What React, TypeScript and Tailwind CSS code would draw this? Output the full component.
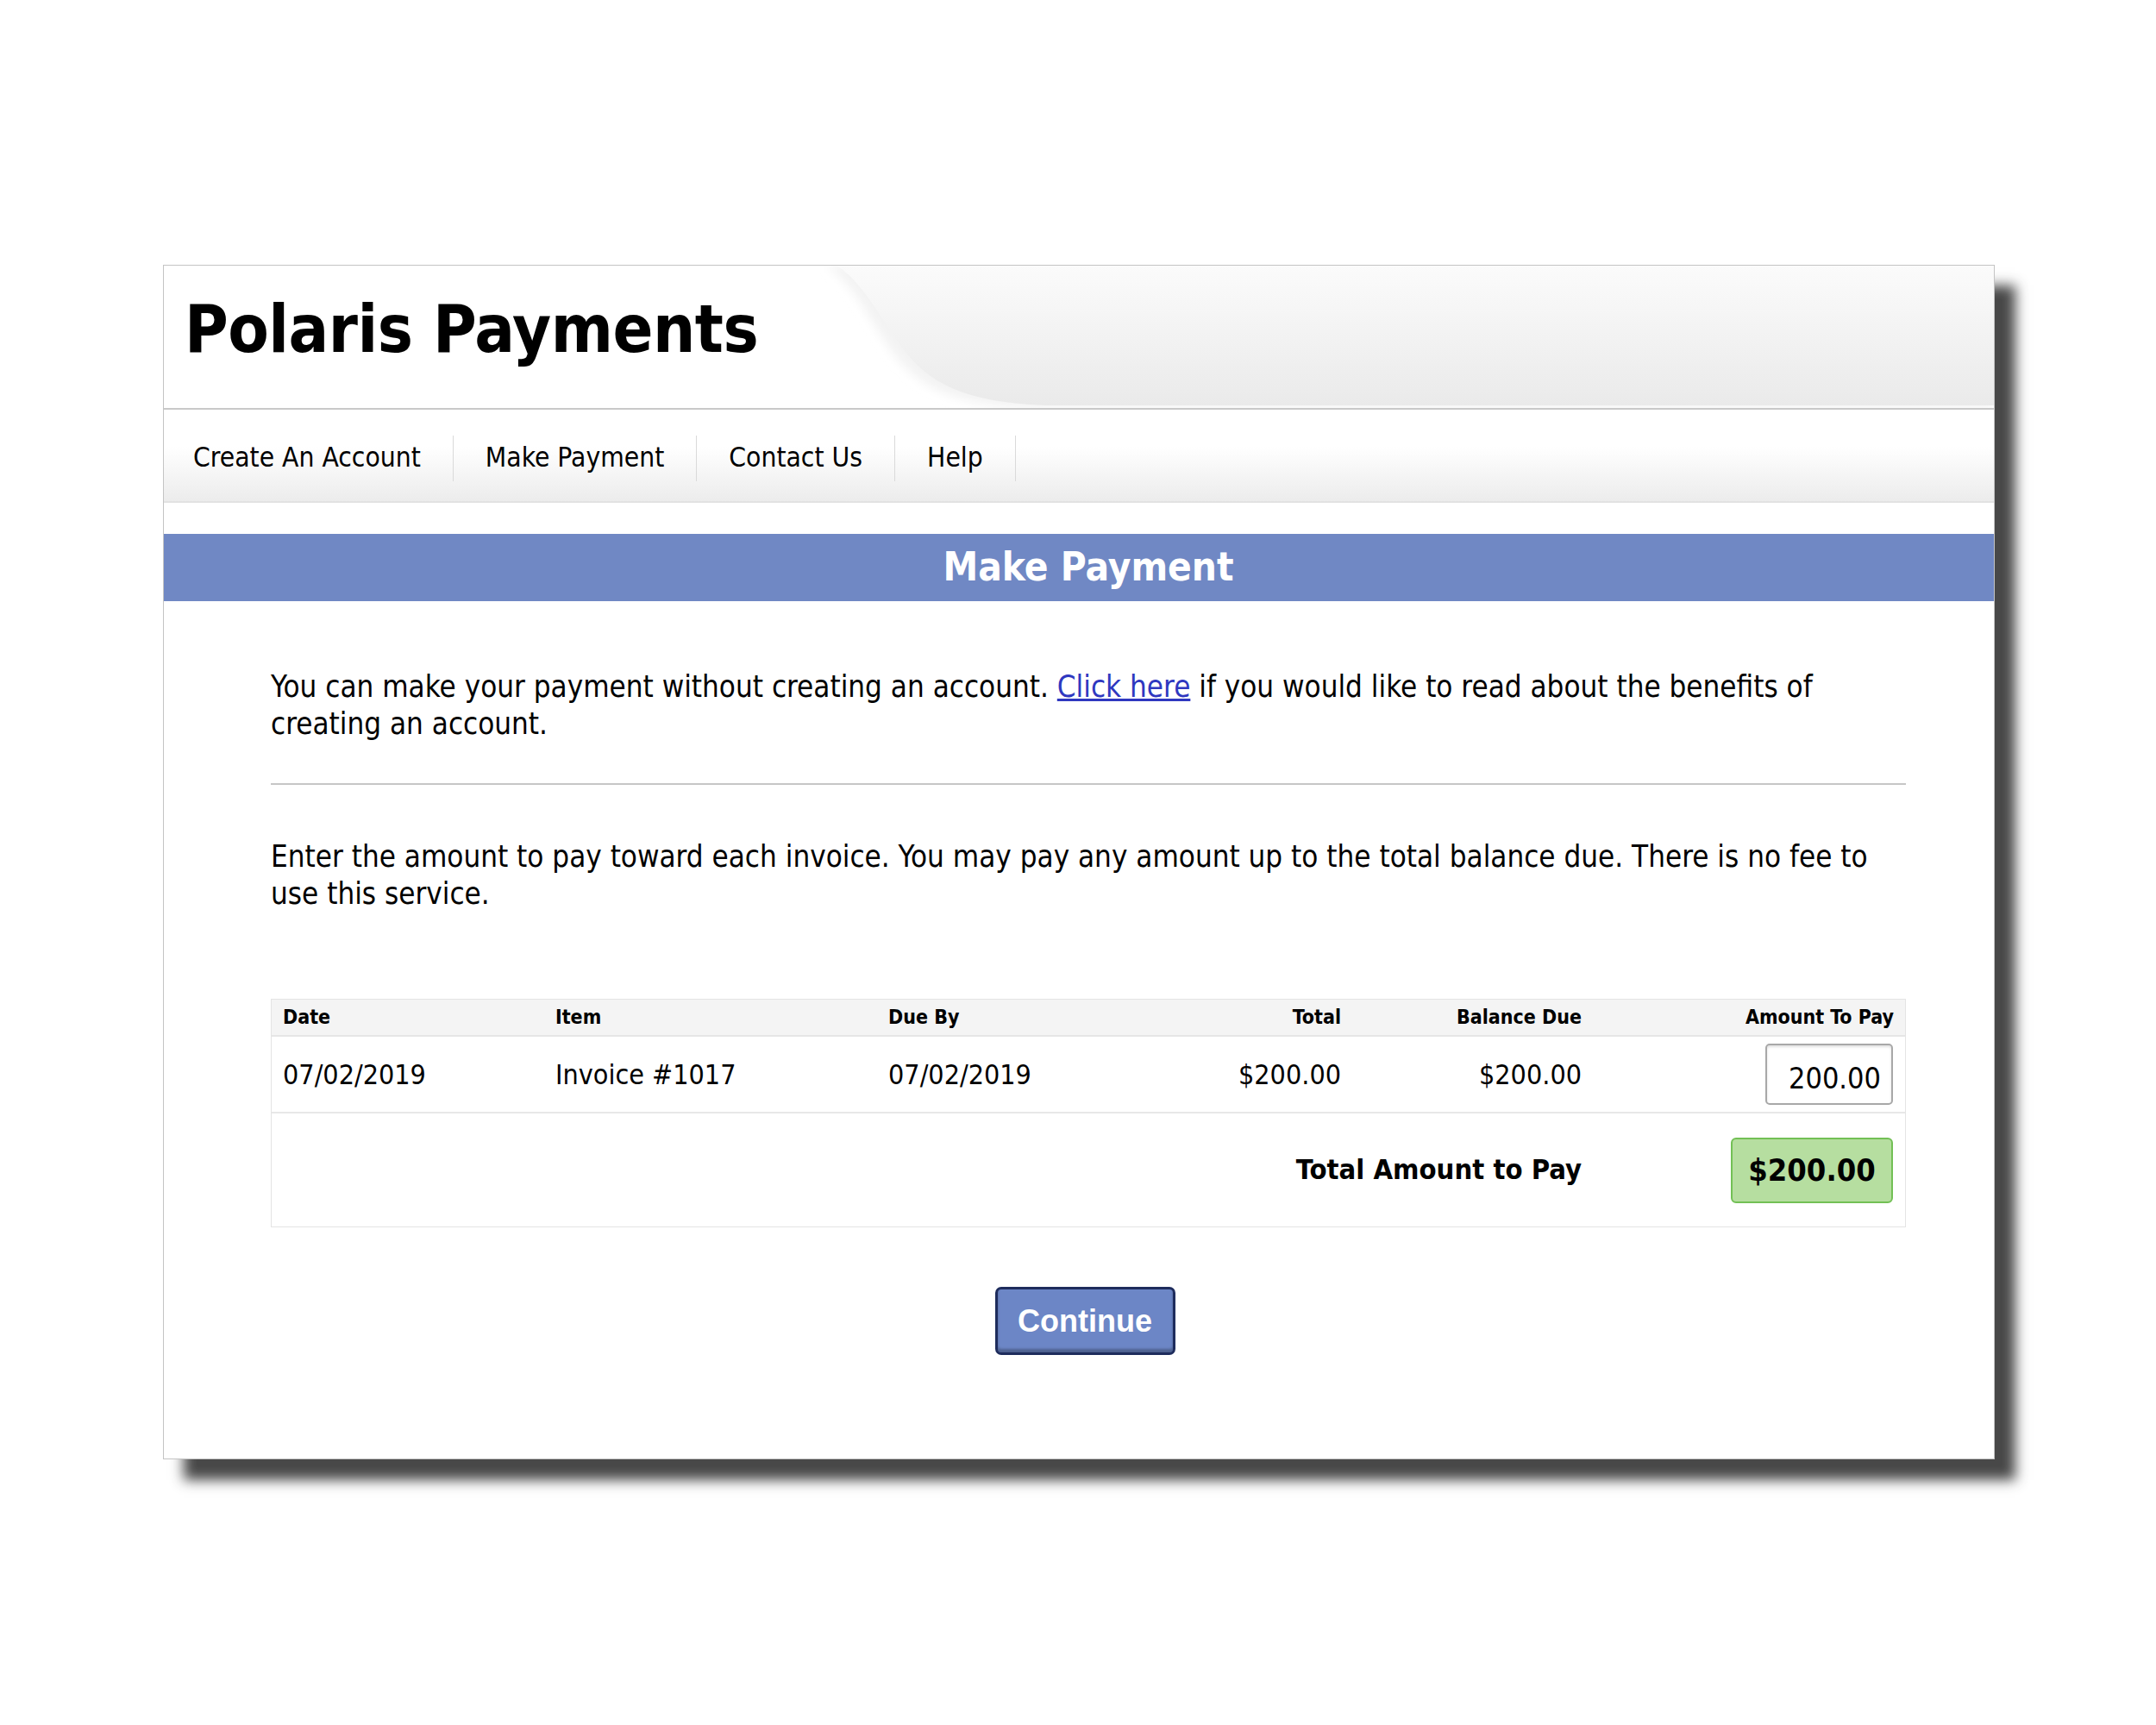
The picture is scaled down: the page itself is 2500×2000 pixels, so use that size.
import React from 'react'

const navItems = ['Create An Account', 'Make Payment', 'Contact Us', 'Help']

function Swoosh() {
  return (
    <svg className="h-full flex-1" viewBox="0 0 1363 167" preserveAspectRatio="none">
      <defs>
        <linearGradient id="swooshFill" x1="0" y1="0" x2="0" y2="1">
          <stop offset="0" stopColor="#fbfbfb" />
          <stop offset="1" stopColor="#eaeaea" />
        </linearGradient>
        <filter id="swooshBlur" x="-20%" y="-20%" width="140%" height="140%">
          <feGaussianBlur stdDeviation="6" />
        </filter>
      </defs>
      <path
        d="M8,0 C40,22 58,62 82,98 C112,140 150,164 250,167 L1363,167 L1363,0 Z"
        fill="#f3f3f3"
        filter="url(#swooshBlur)"
      />
      <path
        d="M21,0 C52,22 70,60 95,95 C125,135 162,160 262,164 L1363,164 L1363,0 Z"
        fill="url(#swooshFill)"
      />
    </svg>
  )
}

export default function App() {
  return (
    <div className="w-[2500px] h-[2000px] bg-white pt-[307px] pl-[189px] font-['DejaVu_Sans_Condensed','DejaVu_Sans',sans-serif] text-black">
      <div className="w-[2124px] h-[1385px] bg-white border border-[#c4c4c4] shadow-[24px_24px_14px_rgba(40,40,40,0.85)] flex flex-col">
        {/* Header */}
        <div className="h-[167px] flex border-b-2 border-[#c9c9c9] shrink-0">
          <div className="w-[760px] shrink-0 pl-[24px] pt-[24px]">
            <h1 className="text-[77px] leading-[100px] font-bold tracking-[-0.5px]">Polaris Payments</h1>
          </div>
          <Swoosh />
        </div>

        {/* Nav */}
        <div className="h-[108px] flex items-center pt-[6px] bg-gradient-to-b from-white from-40% to-[#ececec] border-b-2 border-[#e2e2e2] shrink-0">
          {navItems.map((item, i) => (
            <div
              key={item}
              className={`h-[53px] flex items-center border-r border-[#dadada] text-[31.5px] ${i === 0 ? 'pl-[34px] pr-[37px]' : 'px-[37px]'}`}
            >
              {item}
            </div>
          ))}
        </div>

        {/* Title bar */}
        <div className="mt-[36px] h-[78px] bg-[#7088c4] flex items-center justify-center pl-[22px] shrink-0">
          <h2 className="text-white font-bold text-[45.5px]">Make Payment</h2>
        </div>

        {/* Content */}
        <div className="pl-[124px] pr-[102px] flex flex-col">
          <p className="mt-[78px] text-[34.7px] leading-[43px]">
            You can make your payment without creating an account.{' '}
            <a href="#" className="text-[#2f38c0] underline">Click here</a> if you would like to read about the benefits of creating an account.
          </p>

          <div className="mt-[47px] h-[2px] bg-[#c6c6c6]" />

          <p className="mt-[62px] text-[34.7px] leading-[43px]">
            Enter the amount to pay toward each invoice. You may pay any amount up to the total balance due. There is no fee to use this service.
          </p>

          {/* Table */}
          <div className="mt-[100px] border border-[#e4e4e4]">
            <div className="grid grid-cols-[329px_386px_271px_254px_279px_374px] h-[43px] items-center bg-[#f4f4f4] border-b-2 border-[#e6e6e6] text-[23px] font-bold">
              <div className="pl-[13px]">Date</div>
              <div>Item</div>
              <div>Due By</div>
              <div className="text-right">Total</div>
              <div className="text-right">Balance Due</div>
              <div className="text-right pr-[12px]">Amount To Pay</div>
            </div>
            <div className="grid grid-cols-[329px_386px_271px_254px_279px_374px] h-[89px] items-center border-b-2 border-[#e8e8e8] text-[32px]">
              <div className="pl-[13px]">07/02/2019</div>
              <div>Invoice #1017</div>
              <div>07/02/2019</div>
              <div className="text-right">$200.00</div>
              <div className="text-right">$200.00</div>
              <div className="flex justify-end pr-[13px]">
                <div className="w-[148px] h-[71px] border-2 border-[#a8a8a8] rounded-[5px] shadow-[inset_0_2px_3px_rgba(0,0,0,0.12)] flex items-end justify-end pr-[12px] pb-[12px] text-[34px] leading-none">
                  200.00
                </div>
              </div>
            </div>
            <div className="grid grid-cols-[1519px_374px] h-[131px] items-center">
              <div className="text-right text-[32.5px] font-bold">Total Amount to Pay</div>
              <div className="flex justify-end pr-[13px]">
                <div className="w-[188px] h-[76px] bg-[#b6dea0] border-2 border-[#72c055] rounded-[6px] flex items-center justify-center text-[36px] font-bold">
                  $200.00
                </div>
              </div>
            </div>
          </div>

          <div className="mt-[69px] flex justify-center pr-[8px]">
            <button className="w-[209px] h-[79px] bg-[#6c86c6] border-[3px] border-[#1e2c5c] rounded-[7px] shadow-[inset_0_-4px_3px_rgba(0,0,0,0.28)] text-white font-bold text-[36px] font-['Liberation_Sans',Arial,sans-serif]">
              Continue
            </button>
          </div>
        </div>
      </div>
    </div>
  )
}
